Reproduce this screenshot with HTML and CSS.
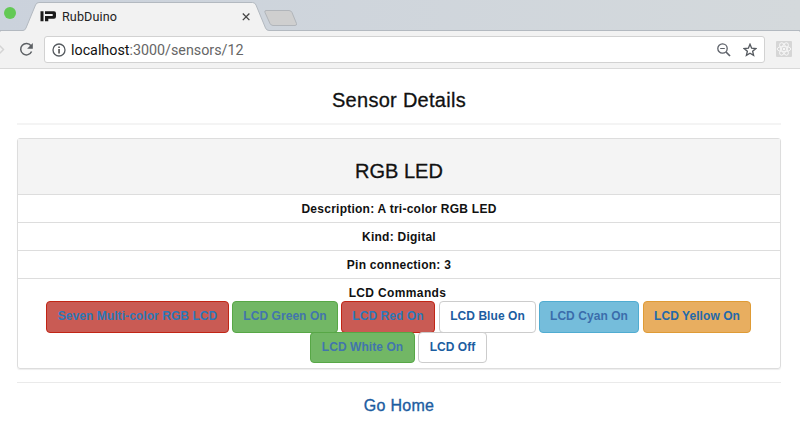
FILE: index.html
```html
<!DOCTYPE html>
<html lang="en">
<head>
<meta charset="utf-8">
<title>RubDuino</title>
<link rel="stylesheet" href="styles.css">
</head>
<body>
<header class="browser">
  <div class="tabstrip">
    <svg class="tab-art" width="800" height="32" viewBox="0 0 800 32">
      <defs><linearGradient id="strip"><stop offset="0" stop-color="#cbd2dc"/><stop offset="1" stop-color="#d4d9dc"/></linearGradient></defs>
      <rect width="800" height="32" fill="url(#strip)"/>
      <path d="M0 30.5H23Q25 30.5 26 28L35.500 5Q36.500 2.500 39 2.500H252.500Q255 2.500 256 5L265.500 28Q266.500 30.500 269 30.500H800V33H0Z" fill="#f2f2f2" stroke="#b3b9c0"/>
      <path d="M266 10.500H289Q291 10.500 292 12.500L296.500 23.500Q297 25.500 295 25.500H273Q271 25.500 270 23.500L265 12.500Q264.300 10.500 266 10.500Z" fill="#cfcfcf" stroke="#b1b5ba"/>
      <circle cx="10" cy="13" r="6" fill="#63c955"/>
      <path d="M40.500 11.300H43.500V21.300H40.500ZM45 11.300H54Q56 11.300 56 13.300V16.500Q56 18.700 54 18.700H48.300V21.300H45V16H52.700V14H45Z" fill="#1a1a1a"/>
      <path d="M242.800 13.500l6.600 6.600m0-6.600l-6.600 6.600" stroke="#444" stroke-width="1.300"/>
    </svg>
    <span class="tab-title">RubDuino</span>
  </div>
  <div class="toolbar">
    <svg class="nav" width="44" height="36" viewBox="0 0 44 36" fill="none">
      <path d="M-1 13L3.500 17.500L-1 22" stroke="#d4d4d4" stroke-width="1.500"/>
      <path d="M31 13.800A5.700 5.700 0 1 0 31.600 19.500" stroke="#5b5f63" stroke-width="1.500"/>
      <path d="M32.800 11V16.700H27.100Z" fill="#5b5f63"/>
    </svg>
    <div class="omnibox">
      <svg class="info" width="14" height="14" viewBox="0 0 14 14"><circle cx="7" cy="7" r="6" fill="none" stroke="#555a5f" stroke-width="1.300"/><path d="M6.300 3.500h1.500v1.500H6.300zM6.300 6h1.500v4.600H6.300z" fill="#444"/></svg>
      <span class="url"><b>localhost</b>:3000/sensors/12</span>
      <svg class="zoom" width="14" height="14" viewBox="0 0 14 14" fill="none" stroke="#5c6068"><circle cx="5.500" cy="5.500" r="4.700" stroke-width="1.300"/><path d="M9 9l4 4" stroke-width="1.700"/><path d="M3.200 5.500h4.600" stroke-width="1"/></svg>
      <svg class="star" width="14" height="14" viewBox="0 0 14 14"><path d="M7 1.300l1.650 3.850 4.150.4-3.150 2.750.95 4.100L7 10.250 3.400 12.400l.95-4.100L1.200 5.550l4.150-.4z" fill="none" stroke="#55595f" stroke-width="1.350"/></svg>
    </div>
    <svg class="ext" width="16" height="16" viewBox="0 0 16 16"><rect width="16" height="16" rx="1" fill="#d6d6d6"/><g fill="none" stroke="#f6f6f6"><ellipse cx="8" cy="8" rx="6.800" ry="2.700" transform="rotate(0 8 8)"/><ellipse cx="8" cy="8" rx="6.800" ry="2.700" transform="rotate(60 8 8)"/><ellipse cx="8" cy="8" rx="6.800" ry="2.700" transform="rotate(120 8 8)"/></g><circle cx="8" cy="8" r="1.200" fill="#f8f8f8"/></svg>
  </div>
</header>
<main>
  <h1>Sensor Details</h1>
  <hr>
  <section class="panel">
    <h2>RGB LED</h2>
    <div class="row">Description: A tri-color RGB LED</div>
    <div class="row">Kind: Digital</div>
    <div class="row">Pin connection: 3</div>
    <div class="commands">
      <div class="label">LCD Commands</div>
      <div class="line">
        <a class="btn danger seven">Seven Multi-color RGB LCD</a>
        <a class="btn success green">LCD Green On</a>
        <a class="btn danger red">LCD Red On</a>
        <a class="btn plain blue">LCD Blue On</a>
        <a class="btn cyan">LCD Cyan On</a>
        <a class="btn warning">LCD Yellow On</a>
      </div>
      <div class="line second">
        <a class="btn success white">LCD White On</a>
        <a class="btn plain off">LCD Off</a>
      </div>
    </div>
  </section>
  <hr class="bottom">
  <a class="home">Go Home</a>
</main>
</body>
</html>
```
FILE: styles.css
```css
* { box-sizing: border-box; }
body { margin: 0; width: 800px; height: 424px; overflow: hidden; background: #fff; color: #111; font-family: "Liberation Sans", Arial, sans-serif; }
.tabstrip { position: relative; height: 32px; }
.tab-art { display: block; }
.tab-title { position: absolute; left: 62px; top: 9px; font: 12.6px/16px Roboto, sans-serif; letter-spacing: .1px; color: #222; }
.toolbar { height: 37px; display: flex; align-items: flex-start; background: #f2f2f2; border-bottom: 1px solid #d9d9d9; }
.nav { flex: none; }
.omnibox { width: 721px; height: 27px; margin-top: 4px; padding: 0 7px 0 7px; display: flex; align-items: center; background: #fff; border: 1px solid #d2d2d2; border-radius: 3px; }
.url { margin-left: 5px; font: 14.3px/24px Roboto, sans-serif; color: #666; white-space: nowrap; }
.url b { font-weight: 400; color: #111; }
.zoom { margin-left: auto; }
.star { margin-left: 12px; }
.ext { margin: 9px 0 0 11px; }
main { padding: 0 19px 0 17px; text-align: center; }
h1, h2 { font-weight: 400; font-size: 20px; -webkit-text-stroke: .3px #111; }
h1 { margin: 0; height: 54px; line-height: 63px; letter-spacing: .28px; }
hr { height: 2px; margin: 0; border: 0; background: #f4f4f4; }
.panel { height: 231px; margin-top: 13px; border: 1px solid #ddd; border-radius: 3px; box-shadow: 0 1px 1px #eee; }
h2 { margin: 0; height: 55px; line-height: 64px; background: #f4f4f4; }
.row { height: 28px; border-top: 1px solid #ddd; line-height: 28px; font-size: 12px; font-weight: 700; letter-spacing: .25px; }
.commands { border-top: 1px solid #ddd; height: 90px; padding-top: 7px; font-size: 12px; font-weight: 700; }
.label { height: 15px; padding-right: 3px; line-height: 15px; letter-spacing: .36px; }
.line { display: flex; height: 31px; padding-left: 28px; }
.btn { flex: none; height: 32px; border: 1px solid; border-radius: 4px; line-height: 29px; letter-spacing: .06px; color: #3b6dab; white-space: nowrap; }
.danger { background: #c95b54; border-color: #c12515; color: #2c78b7; }
.success { background: #72b765; border-color: #57a746; color: #4275ad; }
.plain { background: #fff; border-color: #ccc; color: #1c5da1; }
.cyan { width: 100px; margin-left: 3px; background: #75bddb; border-color: #50acd1; }
.warning { width: 108px; margin-left: 4px; background: #e8ae60; border-color: #df9b35; color: #2369ab; }
.seven { width: 183px; }
.green { width: 106px; margin-left: 3px; }
.red { width: 94px; margin-left: 3px; }
.blue { width: 97px; margin-left: 4px; }
.second { padding-left: 292px; }
.second .btn { height: 31px; }
.white { width: 105px; }
.off { width: 69px; margin-left: 3px; }
.bottom { height: 1px; margin-top: 13px; background: #eaeaea; }
.home { display: block; line-height: 46px; font-size: 16px; letter-spacing: .3px; color: #1c5da1; -webkit-text-stroke: .35px #1c5da1; }
```
